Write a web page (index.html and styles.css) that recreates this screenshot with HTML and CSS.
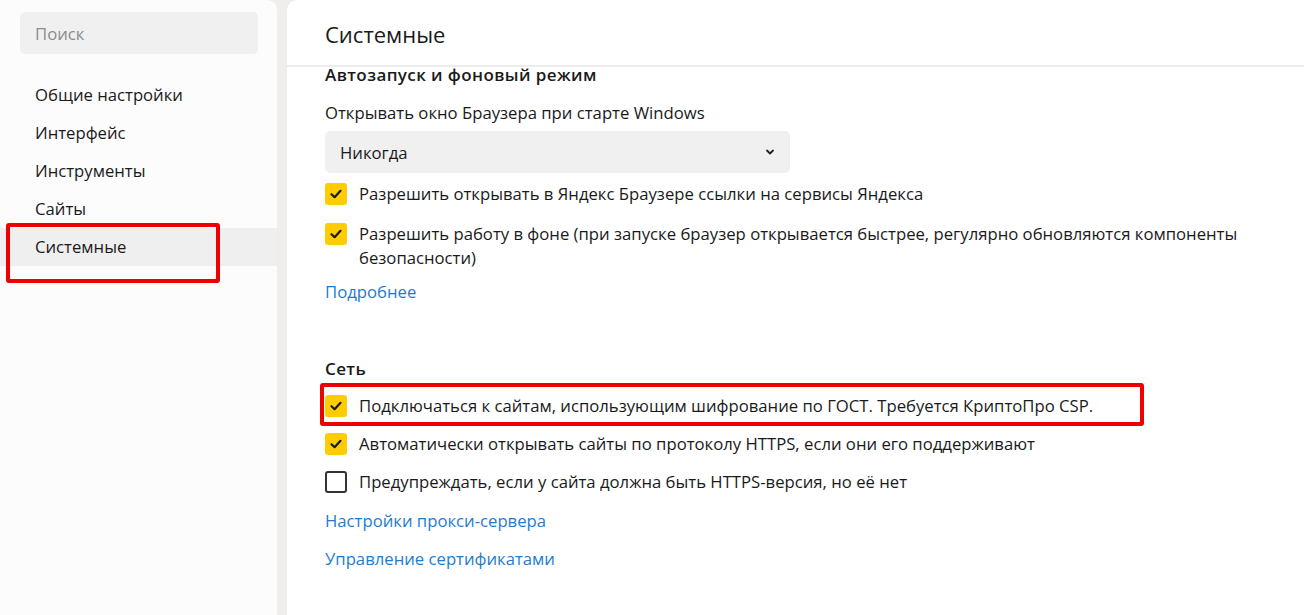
FILE: index.html
```html
<!DOCTYPE html>
<html lang="ru">
<head>
<meta charset="utf-8">
<link rel="stylesheet" href="styles.css">
</head>
<body>
<div class="app">
  <aside class="sidebar">
    <div class="search">Поиск</div>
    <nav class="nav">
      <div class="nav-item">Общие настройки</div>
      <div class="nav-item">Интерфейс</div>
      <div class="nav-item">Инструменты</div>
      <div class="nav-item">Сайты</div>
      <div class="nav-item active">Системные</div>
    </nav>
    <div class="mark mark-nav"></div>
  </aside>
  <main class="main">
    <header class="head">Системные</header>
    <div class="content">
      <h2 class="section-title">Автозапуск и фоновый режим</h2>
      <div class="label">Открывать окно Браузера при старте Windows</div>
      <div class="select">
        <span>Никогда</span>
        <svg class="chev" width="10" height="8" viewBox="0 0 10 8"><path d="M2 2.5 L5 5.5 L8 2.5" fill="none" stroke="#222" stroke-width="1.8" stroke-linecap="round" stroke-linejoin="round"/></svg>
      </div>
      <div class="check-row"><span class="box on"><svg width="16" height="16" viewBox="0 0 16 16"><path d="M3.5 8.2 L6.6 11.2 L12.5 4.8" fill="none" stroke="#1a1a1a" stroke-width="2.2" stroke-linecap="round" stroke-linejoin="round"/></svg></span><span class="ctext">Разрешить открывать в Яндекс Браузере ссылки на сервисы Яндекса</span></div>
      <div class="check-row"><span class="box on"><svg width="16" height="16" viewBox="0 0 16 16"><path d="M3.5 8.2 L6.6 11.2 L12.5 4.8" fill="none" stroke="#1a1a1a" stroke-width="2.2" stroke-linecap="round" stroke-linejoin="round"/></svg></span><span class="ctext">Разрешить работу в фоне (при запуске браузер открывается быстрее, регулярно обновляются компоненты безопасности)</span></div>
      <a class="link more">Подробнее</a>

      <h2 class="section-title net">Сеть</h2>
      <div class="check-row tight marked"><span class="box on"><svg width="16" height="16" viewBox="0 0 16 16"><path d="M3.5 8.2 L6.6 11.2 L12.5 4.8" fill="none" stroke="#1a1a1a" stroke-width="2.2" stroke-linecap="round" stroke-linejoin="round"/></svg></span><span class="ctext">Подключаться к сайтам, использующим шифрование по ГОСТ. Требуется КриптоПро CSP.</span><div class="mark mark-row"></div></div>
      <div class="check-row tight"><span class="box on"><svg width="16" height="16" viewBox="0 0 16 16"><path d="M3.5 8.2 L6.6 11.2 L12.5 4.8" fill="none" stroke="#1a1a1a" stroke-width="2.2" stroke-linecap="round" stroke-linejoin="round"/></svg></span><span class="ctext">Автоматически открывать сайты по протоколу HTTPS, если они его поддерживают</span></div>
      <div class="check-row tight"><span class="box off"></span><span class="ctext">Предупреждать, если у сайта должна быть HTTPS-версия, но её нет</span></div>
      <a class="link l1">Настройки прокси-сервера</a>
      <a class="link l2">Управление сертификатами</a>
    </div>
  </main>
</div>
</body>
</html>
```

FILE: styles.css
```css
* { box-sizing: border-box; margin: 0; padding: 0; }
html, body { width: 1304px; height: 615px; overflow: hidden; }
body {
  background: #efeeec;
  font-family: "Open Sans", "Noto Sans", sans-serif;
  color: #1a1a1a;
  font-size: 16.7px;
}
.app {
  display: flex;
  gap: 10px;
  height: 615px;
}
.sidebar {
  position: relative;
  width: 277px;
  flex: none;
  background: #fcfcfc;
  border-top-right-radius: 10px;
  padding-top: 12px;
}
.search {
  margin: 0 19px 0 20px;
  height: 42px;
  background: #f0f0f0;
  border-radius: 5px;
  color: #8c8c8c;
  padding-left: 15px;
  line-height: 43px;
  font-size: 16.7px;
}
.nav { margin-top: 22px; }
.nav-item {
  height: 38px;
  line-height: 38px;
  padding-left: 35px;
  font-size: 16.7px;
  color: #1a1a1a;
}
.nav-item.active { background: #efefef; }
.mark {
  position: absolute;
  border: 4px solid #ee0000;
  border-radius: 3px;
  pointer-events: none;
}
.mark-nav { left: 6px; top: 223px; width: 214px; height: 60px; }
.main {
  flex: 1;
  background: #ffffff;
  border-top-left-radius: 10px;
}
.head {
  height: 67px;
  border-bottom: 2px solid #ececec;
  padding-left: 38px;
  padding-top: 18px;
  font-size: 22px;
  line-height: 32px;
  color: #1a1a1a;
}
.content { padding-left: 38px; }
.section-title {
  font-size: 17px;
  font-weight: 600;
  letter-spacing: 0.4px;
  line-height: 22px;
  margin-top: -3px;
  color: #1a1a1a;
}
.section-title.net { margin-top: 54px; }
.label { margin-top: 16px; line-height: 22px; }
.select {
  margin-top: 7px;
  width: 465px;
  height: 42px;
  background: #f0f0f0;
  border-radius: 5px;
  display: flex;
  align-items: center;
  justify-content: space-between;
  padding: 0 15px 0 15px;
}
.check-row {
  display: flex;
  align-items: flex-start;
  margin-top: 9px;
  line-height: 24px;
  max-width: 940px;
}
.check-row + .check-row { margin-top: 16px; }
.check-row.tight { margin-top: 14px; position: relative; }
.check-row.tight + .check-row.tight { margin-top: 14px; }
.box {
  flex: none;
  width: 22px;
  height: 22px;
  border-radius: 3px;
  margin-top: 1px;
  margin-right: 12px;
  display: flex;
  align-items: center;
  justify-content: center;
}
.box.on { background: #ffcc00; }
.box.off { border: 2px solid #333; }
.ctext { font-size: 16.7px; }
.mark-row { left: -5px; top: -11px; width: 824px; height: 43px; }
.link {
  display: block;
  color: #1f7bd1;
  line-height: 24px;
  text-decoration: none;
}
.more { margin-top: 10px; }
.l1 { margin-top: 15px; }
.l2 { margin-top: 14px; }
```
